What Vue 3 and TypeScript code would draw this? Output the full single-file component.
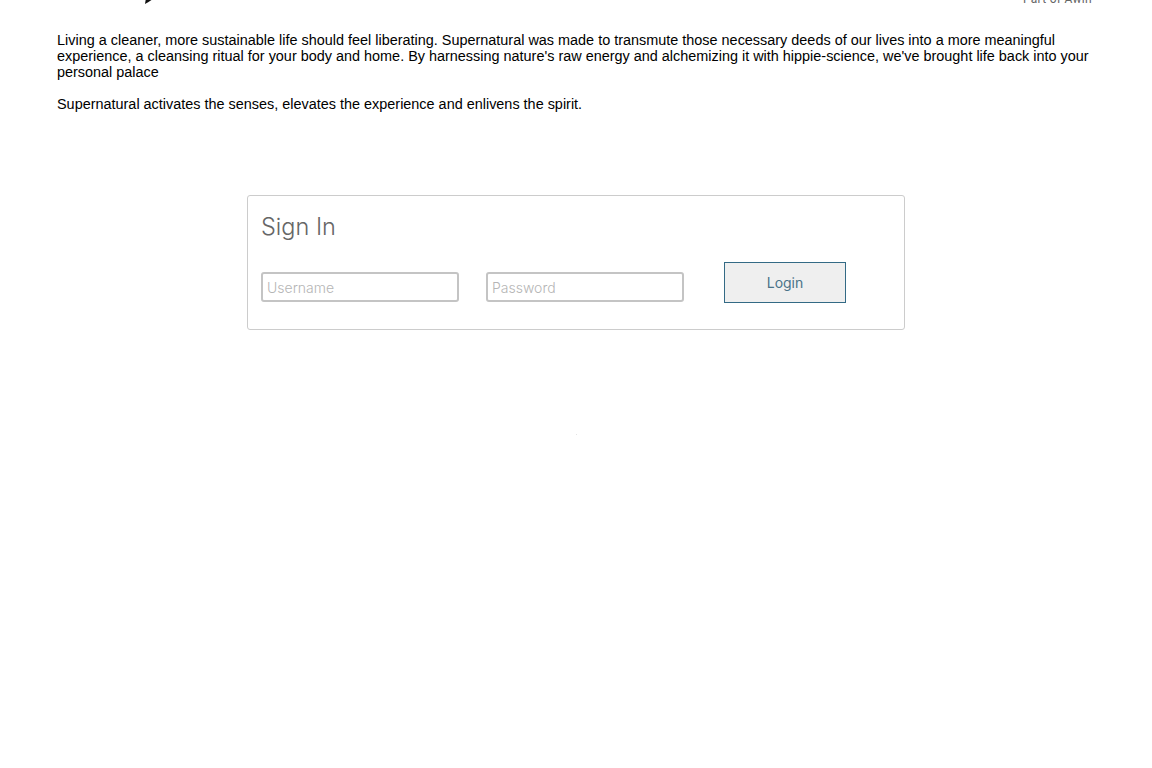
<template>
  <main class="page">
    <header class="top">
      <svg class="logo" width="14" height="16" viewBox="0 0 14 16"><path d="M0 16 L1 10 L14 5 Q8 12 0 16Z" fill="#111" /></svg>
      <span class="part">Part of Awin</span>
    </header>

    <section class="intro">
      <p>Living a cleaner, more sustainable life should feel liberating. Supernatural was made to transmute those necessary deeds of our lives into a more meaningful experience, a cleansing ritual for your body and home. By harnessing nature's raw energy and alchemizing it with hippie-science, we've brought life back into your personal palace</p>
      <p>Supernatural activates the senses, elevates the experience and enlivens the spirit.</p>
    </section>

    <form class="card" @submit.prevent>
      <h2>Sign In</h2>
      <div class="row">
        <input v-model="username" type="text" placeholder="Username" />
        <input v-model="password" type="password" placeholder="Password" />
        <button type="submit">Login</button>
      </div>
    </form>
    <div class="dot"></div>
  </main>
</template>

<script setup lang="ts">
import { ref } from 'vue'

const username = ref('')
const password = ref('')
</script>

<style>
html, body { background: #fff; overflow: hidden; }
</style>

<style scoped>
.page { height: 768px; overflow: hidden; }

/* header is scrolled off the top in the reference */
.top {
  display: flex;
  justify-content: space-between;
  align-items: flex-end;
  height: 7px;
  padding: 0 60px 0 145px;
}
.logo { margin-bottom: 3px; }
.part { font: 12px/16px Roboto, sans-serif; color: #666; letter-spacing: 0.3px; }

.intro { margin: 25px 57px 0; font: 14.43px/16px "Liberation Sans", Arial, sans-serif; color: #000; }
.intro p { margin: 0 0 16px; }

.card {
  box-sizing: border-box;
  width: 658px;
  height: 135px;
  margin: 83px auto 0;
  padding: 16px 13px 0;
  border: 1px solid #ccc;
  border-radius: 3px;
}
h2 {
  margin: 0;
  font: 300 23.5px/30px Inter, sans-serif;
  color: #666;
}
.row { display: flex; align-items: flex-end; margin-top: 20px; }
input {
  box-sizing: border-box;
  width: 198px;
  height: 30px;
  margin: 0 27px 1px 0;
  padding: 0 4px;
  border: 2px solid #c4c4c4;
  border-radius: 3px;
  background: #fff;
  font: 300 14px Inter, sans-serif;
  outline: none;
}
input::placeholder { color: #b5b5b5; }
input + input { margin-right: 40px; }
button {
  box-sizing: border-box;
  width: 122px;
  height: 41px;
  border: 1px solid #336a85;
  background: #efefef;
  color: #4a7389;
  font: 14px Inter, sans-serif;
  padding: 0;
}
.dot { width: 1px; height: 1px; margin: 104px auto 0; background: #e4e4e4; }
</style>
